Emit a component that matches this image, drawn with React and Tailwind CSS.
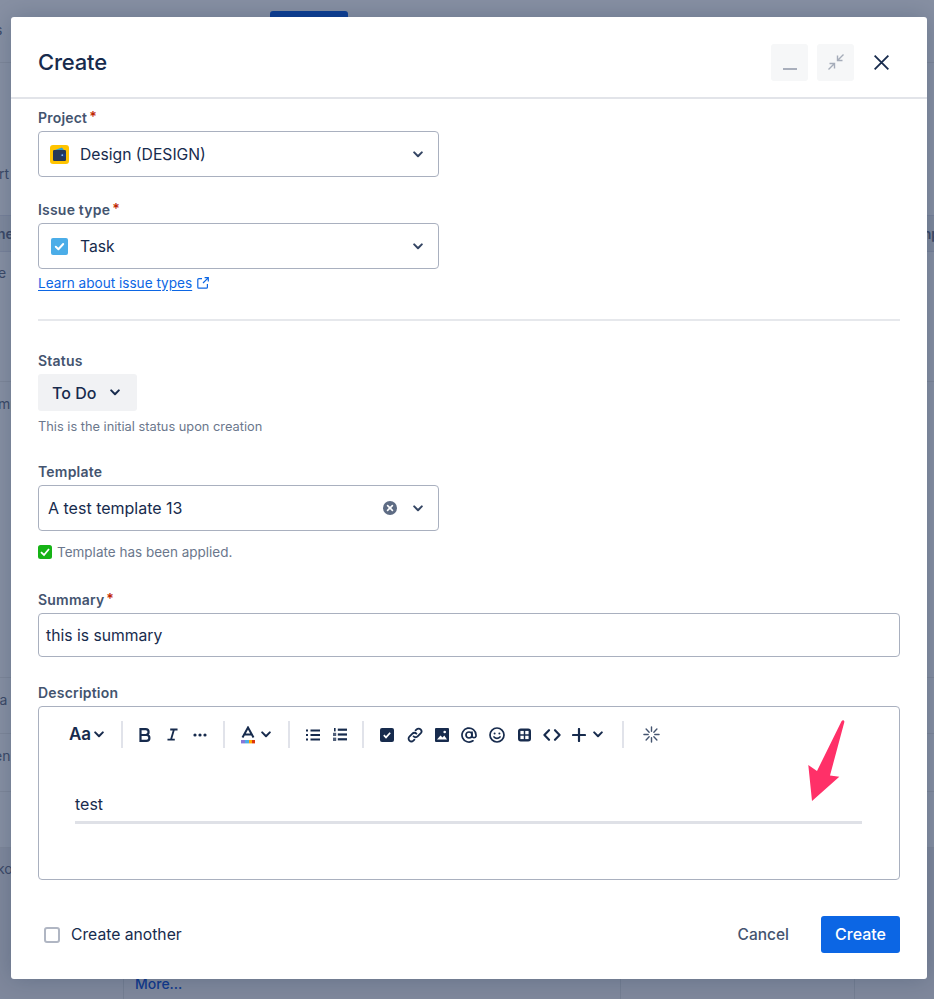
import React from "react";

const Chevron = ({ className = "w-[10px] h-[7px]" }) => (
  <svg viewBox="0 0 10 7" className={className} fill="none" stroke="currentColor" strokeWidth="2" strokeLinecap="round" strokeLinejoin="round">
    <path d="M1.2 1.4 5 5.2l3.8-3.8" />
  </svg>
);

const Sep = ({ className = "" }) => <div className={`w-[2px] h-[27px] bg-[#e1e3ea] shrink-0 ${className}`} />;

const Label = ({ children, req }) => (
  <div className="h-[16px] pt-[1px] text-[14px] leading-[16px] font-semibold text-[#44546f] tracking-[0.2px] flex items-start">
    {children}
    {req && <span className="text-[#bf2600] ml-[2px] leading-[14px]">*</span>}
  </div>
);

const Select = ({ children }) => (
  <div className="h-[46px] w-[401px] border border-[#a9b0bf] rounded-[4px] flex items-center text-[15.7px] text-[#172b4d] bg-white">
    {children}
  </div>
);

function Backdrop() {
  const text = "text-[14px] leading-[20px] text-[#3c4a68]";
  return (
    <div className="h-[999px] bg-[#8790a3] flex flex-col overflow-hidden">
      <div className="h-[63px] shrink-0 border-b border-[#7e8799] relative">
        <div className={`${text} ml-[-5px] mt-[20px]`}>s</div>
        <div className="absolute left-[270px] top-[11px] w-[78px] h-[8px] rounded-t-[3px] bg-[#0f3f94]" />
      </div>
      <div className="h-[152px] shrink-0 flex items-end pb-[31px]">
        <div className={`${text} ml-[-1px]`}>rt</div>
      </div>
      <div className="h-[37px] shrink-0 bg-[#7f899d] border-y border-[#78829a] flex items-center justify-between">
        <div className={`${text} font-semibold ml-[-3px]`}>ne</div>
        <div className={`${text} font-semibold mr-[-6px]`}>np</div>
      </div>
      <div className="h-[130px] shrink-0 border-b border-[#7e8799] pt-[11px]">
        <div className={`${text} ml-[-2px]`}>e</div>
      </div>
      <div className="h-[296px] shrink-0 border-b border-[#7e8799] pt-[12px]">
        <div className={`${text} ml-[-2px]`}>mp</div>
      </div>
      <div className="h-[56px] shrink-0 border-b border-[#7e8799] pt-[12px]">
        <div className={`${text} ml-[-4px]`}>la</div>
      </div>
      <div className="h-[58px] shrink-0 border-b border-[#7e8799] pt-[12px]">
        <div className={`${text} ml-[-6px]`}>en</div>
      </div>
      <div className="h-[56px] shrink-0 border-b border-[#7e8799]" />
      <div className="flex-1 bg-[#7f889c] flex">
        <div className="w-[124px] shrink-0 border-r border-[#747e92] pt-[11px]">
          <div className={`${text} ml-[-3px]`}>ko</div>
        </div>
        <div className="w-[497px] shrink-0 border-r border-[#747e92] flex items-end pl-[11px] pb-[5px]">
          <div className="text-[14px] leading-[20px] font-medium text-[#123a8c]">More...</div>
        </div>
        <div className="w-[234px] shrink-0 border-r border-[#747e92]" />
      </div>
    </div>
  );
}

const Toolbar = () => (
  <div className="h-[27px] mt-[14px] flex items-center text-[#172b4d]">
    <div className="ml-[30px] text-[17px] font-semibold leading-none w-[25px] tracking-[-0.2px]">Aa</div>
    <Chevron className="w-[10px] h-[7px]" />
    <Sep className="ml-[17px]" />
    <svg viewBox="0 0 12 14" className="ml-[16px] w-[12px] h-[14px]" fill="none" stroke="currentColor" strokeWidth="2.2">
      <path d="M1.5 1.2h5.2a2.9 2.9 0 0 1 0 5.8H1.5zM1.5 7h6a2.9 2.9 0 0 1 0 5.8h-6z" />
    </svg>
    <svg viewBox="0 0 12 13" className="ml-[16px] w-[11px] h-[13px]" fill="none" stroke="currentColor" strokeWidth="2">
      <path d="M3.5 1h8M.5 12h8M7.6 1 4.4 12" />
    </svg>
    <svg viewBox="0 0 14 4" className="ml-[15px] w-[14px] h-[4px]" fill="currentColor">
      <circle cx="2" cy="2" r="1.6" /><circle cx="7" cy="2" r="1.6" /><circle cx="12" cy="2" r="1.6" />
    </svg>
    <Sep className="ml-[16px]" />
    <svg viewBox="0 0 14 18" className="ml-[16px] w-[14px] h-[18px] mt-[1px]" fill="none">
      <path d="M1.5 11.5 7 1.5l5.5 10M3.2 8.4h7.6" stroke="#172b4d" strokeWidth="2" />
      <rect x="0" y="14" width="4" height="3.4" fill="#8777d9" />
      <rect x="4" y="14" width="4" height="3.4" fill="#4bade8" />
      <rect x="8" y="14" width="3" height="3.4" fill="#ffab00" />
      <rect x="11" y="14" width="3" height="3.4" fill="#de350b" />
    </svg>
    <Chevron className="ml-[6px] w-[10px] h-[7px]" />
    <Sep className="ml-[17px]" />
    <svg viewBox="0 0 14 12" className="ml-[16px] w-[14px] h-[12px]" fill="currentColor">
      <rect x="0" y="0.5" width="2" height="2" /><rect x="0" y="5" width="2" height="2" /><rect x="0" y="9.5" width="2" height="2" />
      <rect x="4.5" y="0.5" width="9.5" height="2" /><rect x="4.5" y="5" width="9.5" height="2" /><rect x="4.5" y="9.5" width="9.5" height="2" />
    </svg>
    <svg viewBox="0 0 14 13" className="ml-[13px] w-[14px] h-[13px]" fill="currentColor">
      <rect x="1" y="0" width="1.6" height="3.4" /><rect x="0" y="4.8" width="3.2" height="3.2" opacity="0.75" /><rect x="0" y="9.6" width="3.2" height="3.4" opacity="0.75" />
      <rect x="4.8" y="0.6" width="9.2" height="2.2" /><rect x="4.8" y="5.4" width="9.2" height="2.2" /><rect x="4.8" y="10.2" width="9.2" height="2.2" />
    </svg>
    <Sep className="ml-[15px]" />
    <svg viewBox="0 0 14 14" className="ml-[16px] w-[14px] h-[14px]">
      <rect width="14" height="14" rx="2" fill="#172b4d" />
      <path d="M3.8 7.2 6 9.4l4.2-4.6" stroke="#fff" strokeWidth="1.7" fill="none" />
    </svg>
    <svg viewBox="0 0 16 16" className="ml-[13px] w-[16px] h-[16px]" fill="none" stroke="currentColor" strokeWidth="1.8" strokeLinecap="round">
      <path d="M6.6 9.4a2.8 2.8 0 0 0 4 0l3-3a2.8 2.8 0 0 0-4-4l-1 1" />
      <path d="M9.4 6.6a2.8 2.8 0 0 0-4 0l-3 3a2.8 2.8 0 0 0 4 4l1-1" />
    </svg>
    <svg viewBox="0 0 14 14" className="ml-[12px] w-[14px] h-[14px]">
      <rect width="14" height="14" rx="1" fill="#172b4d" />
      <path d="M2 11.5 5.5 7.5l2 2 1.8-2 2.7 4z" fill="#fff" />
      <circle cx="9.7" cy="4" r="1.3" fill="#fff" />
    </svg>
    <svg viewBox="0 0 16 16" className="ml-[12px] w-[16px] h-[16px]" fill="none" stroke="currentColor" strokeWidth="1.7">
      <circle cx="8" cy="8" r="3" />
      <path d="M11 5v4.2a2.1 2.1 0 0 0 4 0V8a7 7 0 1 0-3 5.8" strokeLinecap="round" />
    </svg>
    <svg viewBox="0 0 16 16" className="ml-[12px] w-[16px] h-[16px]" fill="none" stroke="currentColor" strokeWidth="1.7">
      <circle cx="8" cy="8" r="7" />
      <circle cx="5.6" cy="6.4" r="1" fill="currentColor" stroke="none" />
      <circle cx="10.4" cy="6.4" r="1" fill="currentColor" stroke="none" />
      <path d="M5 10c1.6 1.8 4.4 1.8 6 0" strokeLinecap="round" />
    </svg>
    <svg viewBox="0 0 14 14" className="ml-[13px] w-[13px] h-[14px]">
      <rect width="14" height="14" rx="3" fill="#172b4d" />
      <rect x="2.6" y="2.6" width="3.6" height="3.6" fill="#fff" /><rect x="7.8" y="2.6" width="3.6" height="3.6" fill="#fff" />
      <rect x="2.6" y="7.8" width="3.6" height="3.6" fill="#fff" /><rect x="7.8" y="7.8" width="3.6" height="3.6" fill="#fff" />
    </svg>
    <svg viewBox="0 0 18 12" className="ml-[12px] w-[18px] h-[12px]" fill="none" stroke="currentColor" strokeWidth="2.1" strokeLinecap="round" strokeLinejoin="round">
      <path d="M6 1.2 1.4 6 6 10.8M12 1.2 16.6 6 12 10.8" />
    </svg>
    <svg viewBox="0 0 14 14" className="ml-[11px] w-[14px] h-[14px]" fill="none" stroke="currentColor" strokeWidth="2.2" strokeLinecap="round">
      <path d="M7 1v12M1 7h12" />
    </svg>
    <Chevron className="ml-[7px] w-[10px] h-[7px]" />
    <Sep className="ml-[19px] bg-[#dcdfe6]" />
    <svg viewBox="0 0 18 18" className="ml-[19px] w-[17px] h-[17px]" fill="none" stroke="#44546f" strokeWidth="1.5" strokeLinecap="round">
      <path d="M9 1v4.5M9 12.5V17M1 9h4.5M12.5 9H17M3.3 3.3l3.2 3.2M11.5 11.5l3.2 3.2M14.7 3.3l-3.2 3.2M6.5 11.5l-3.2 3.2" />
    </svg>
  </div>
);

export default function App() {
  return (
    <div className="relative w-[934px] h-[999px] overflow-hidden font-['Inter',sans-serif]">
      <Backdrop />
      <div className="absolute left-[11px] top-[17px] w-[916px] h-[962px] bg-white rounded-[3px] shadow-[0_0_24px_rgba(9,30,66,0.22)] flex flex-col">
        <div className="h-[82px] shrink-0 border-b-2 border-[#e2e4e9] flex items-center pl-[27px] pt-[10px]">
          <div className="text-[22px] leading-[28px] font-medium text-[#172b4d] tracking-[-0.2px] flex-1">Create</div>
          <div className="flex items-center">
            <div className="w-[37px] h-[37px] rounded-[3px] bg-[#f6f7f8] flex items-end justify-center pb-[11px]">
              <div className="w-[14px] h-[2px] bg-[#a9afbc]" />
            </div>
            <div className="w-[37px] h-[37px] ml-[9px] rounded-[3px] bg-[#f6f7f8] flex items-center justify-center">
              <svg viewBox="0 0 16 16" className="w-[16px] h-[16px]" fill="none" stroke="#a5acb9" strokeWidth="1.4">
                <path d="M15.5.5 9.5 6.5M9.5 1.5v5h5M.5 15.5l6-6M1.5 9.5h5v5" />
              </svg>
            </div>
            <svg viewBox="0 0 14 14" className="ml-[20px] mr-[38px] w-[15px] h-[15px]" fill="none" stroke="#172b4d" strokeWidth="1.7">
              <path d="M.6.6l12.8 12.8M13.4.6.6 13.4" />
            </svg>
          </div>
        </div>

        <div className="pl-[27px] pr-[27px] pt-[10px] flex-1 flex flex-col">
          <Label req>Project</Label>
          <div className="mt-[6px]">
            <Select>
              <svg viewBox="0 0 19 19" className="ml-[11px] w-[19px] h-[19px]">
                <rect width="19" height="19" rx="3" fill="#ffc400" />
                <rect x="3" y="5" width="13" height="11" rx="1.2" fill="#253858" />
                <path d="M5 5 12 2.5 14 5z" fill="#2f9fd8" />
                <rect x="10.5" y="8.5" width="5.5" height="3.5" rx="1" fill="#1a3c7a" />
                <circle cx="12.3" cy="10.2" r="0.9" fill="#8fb8e8" />
              </svg>
              <span className="ml-[11px] flex-1 pt-[2px]">Design (DESIGN)</span>
              <Chevron className="mr-[15px] w-[10px] h-[7px] text-[#344563]" />
            </Select>
          </div>

          <div className="mt-[24px]"><Label req>Issue type</Label></div>
          <div className="mt-[6px]">
            <Select>
              <svg viewBox="0 0 17 17" className="ml-[12px] w-[17px] h-[17px]">
                <rect width="17" height="17" rx="2" fill="#4bade8" />
                <path d="M4.8 8.8 7.4 11.2 12.2 6" stroke="#fff" strokeWidth="2" fill="none" strokeLinecap="round" strokeLinejoin="round" />
              </svg>
              <span className="ml-[12px] flex-1 pt-[2px]">Task</span>
              <Chevron className="mr-[15px] w-[10px] h-[7px] text-[#344563]" />
            </Select>
          </div>
          <div className="mt-[5px] flex items-center h-[18px] text-[13.6px] text-[#0c66e4]">
            <span className="underline underline-offset-2">Learn about issue types</span>
            <svg viewBox="0 0 12 12" className="ml-[5px] w-[12px] h-[12px]" fill="none" stroke="#0c66e4" strokeWidth="1.2">
              <path d="M5 1.6H1.8a1 1 0 0 0-1 1v7.6a1 1 0 0 0 1 1h7.6a1 1 0 0 0 1-1V7M6 6l5.2-5.2M7.6.7h3.7v3.7" />
            </svg>
          </div>

          <div className="mt-[27px] h-[2px] bg-[#e6e8ec]" />

          <div className="mt-[31px]"><Label>Status</Label></div>
          <div className="mt-[6px] w-[99px] h-[37px] rounded-[3px] bg-[#f1f2f4] flex items-center pl-[14px] text-[16px] font-medium text-[#172b4d]">
            <span className="flex-1">To Do</span>
            <Chevron className="mr-[17px] w-[10px] h-[7px]" />
          </div>
          <div className="mt-[8px] text-[12.8px] leading-[16px] text-[#6b778c]">This is the initial status upon creation</div>

          <div className="mt-[28px]"><Label>Template</Label></div>
          <div className="mt-[6px]">
            <Select>
              <span className="ml-[9px] flex-1 text-[16px]">A test template 13</span>
              <svg viewBox="0 0 14 14" className="mr-[16px] w-[14px] h-[14px]">
                <circle cx="7" cy="7" r="7" fill="#5e6c84" />
                <path d="M4.6 4.6l4.8 4.8M9.4 4.6 4.6 9.4" stroke="#fff" strokeWidth="1.6" strokeLinecap="round" />
              </svg>
              <Chevron className="mr-[15px] w-[10px] h-[7px] text-[#344563]" />
            </Select>
          </div>
          <div className="mt-[13px] flex items-center h-[16px] text-[13.5px] text-[#6b778c]">
            <svg viewBox="0 0 14 14" className="w-[14px] h-[14px]">
              <rect width="14" height="14" rx="2.5" fill="#16b316" />
              <path d="M3 7.2 6 10l5-6" stroke="#fff" strokeWidth="1.8" fill="none" />
            </svg>
            <span className="ml-[5px]">Template has been applied.</span>
          </div>

          <div className="mt-[31px]"><Label req>Summary</Label></div>
          <div className="mt-[6px] h-[44px] border border-[#a9b0bf] rounded-[4px] flex items-center pl-[7px] pt-[2px] text-[15.7px] text-[#172b4d]">this is summary</div>

          <div className="mt-[27px]"><Label>Description</Label></div>
          <div className="mt-[6px] h-[174px] border border-[#a9b0bf] rounded-[4px] relative">
            <Toolbar />
            <div className="mt-[44px] ml-[36px] text-[16px] leading-[24px] text-[#172b4d]">test</div>
            <div className="mt-[5px] ml-[36px] w-[787px] h-[3px] bg-[#dfe1e7]" />
            <svg viewBox="0 0 40 84" className="absolute left-[769px] top-[12px] w-[40px] h-[84px]" fill="#ff3068">
              <path d="M33.5 2.2c1.2-1.6 3.2-.8 2.8 1L22 56.5l9.3 1.3L4 82 .3 46l8.7 6z" />
            </svg>
          </div>

          <div className="mt-[36px] flex items-center h-[37px]">
            <div className="ml-[6px] w-[16px] h-[16px] border-2 border-[#b0b6c3] rounded-[3px]" />
            <span className="ml-[11px] flex-1 text-[15.7px] text-[#172b4d]">Create another</span>
            <span className="text-[15.5px] font-medium text-[#44546f]">Cancel</span>
            <div className="ml-[32px] w-[79px] h-[37px] rounded-[3px] bg-[#0c66e4] flex items-center justify-center pb-[1px] text-[16px] font-medium text-white">Create</div>
          </div>
        </div>
      </div>
    </div>
  );
}
